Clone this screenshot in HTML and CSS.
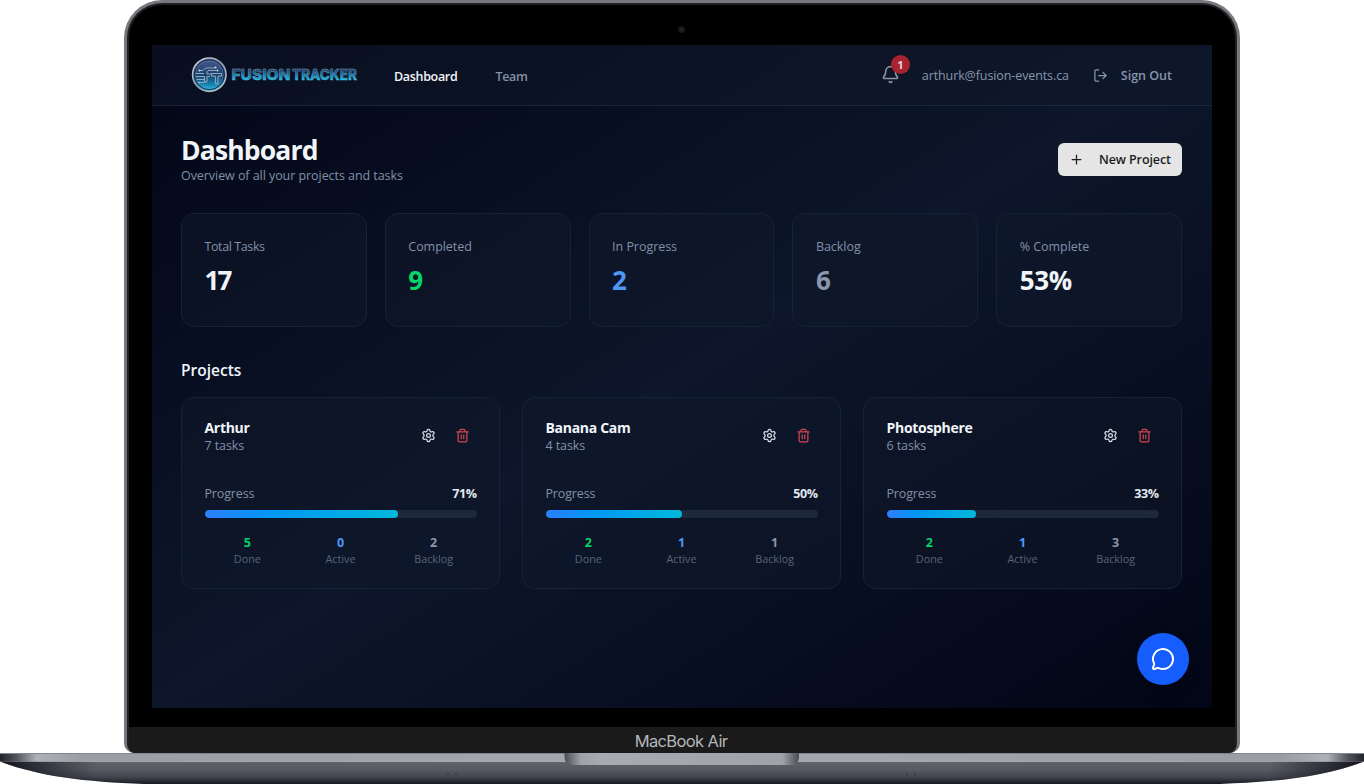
FILE: index.html
```
<!DOCTYPE html>
<html lang="en">
<head>
<meta charset="utf-8">
<title>Fusion Tracker</title>
<link rel="stylesheet" href="styles.css">
</head>
<body>
<svg class="defs" width="0" height="0">
  <defs>
    <symbol id="gear" viewBox="0 0 24 24"><path d="M9.67 4.14a2.34 2.34 0 0 1 4.66 0 2.34 2.34 0 0 0 3.32 1.91 2.34 2.34 0 0 1 2.33 4.03 2.34 2.34 0 0 0 0 3.84 2.34 2.34 0 0 1-2.33 4.03 2.34 2.34 0 0 0-3.32 1.91 2.34 2.34 0 0 1-4.66 0 2.34 2.34 0 0 0-3.32-1.91 2.34 2.34 0 0 1-2.33-4.03 2.34 2.34 0 0 0 0-3.84 2.34 2.34 0 0 1 2.33-4.03 2.34 2.34 0 0 0 3.32-1.91"/><circle cx="12" cy="12" r="3"/></symbol>
    <symbol id="trash" viewBox="0 0 24 24"><path d="M3 6h18M19 6v14a2 2 0 0 1-2 2H7a2 2 0 0 1-2-2V6M8 6V4a2 2 0 0 1 2-2h4a2 2 0 0 1 2 2v2M10 11v6M14 11v6"/></symbol>
  </defs>
</svg>
<div class="laptop">
  <div class="lid">
    <div class="bezel-top"><span class="camera"></span></div>
    <div class="screen">
      <header class="topbar">
        <svg class="logo" width="176" height="38" viewBox="0 0 176 38">
          <defs>
            <linearGradient id="disc" x1="0" y1="0" x2="0" y2="1"><stop offset="0" stop-color="#4b5c8f"/><stop offset=".5" stop-color="#1a426f"/><stop offset=".72" stop-color="#146f9d"/><stop offset="1" stop-color="#25c2ea"/></linearGradient>
            <linearGradient id="ring" x1="0" y1="0" x2="1" y2="1"><stop offset="0" stop-color="#d8dade"/><stop offset=".5" stop-color="#969ca6"/><stop offset="1" stop-color="#c9ced4"/></linearGradient>
            <linearGradient id="word" gradientUnits="userSpaceOnUse" x1="0" y1="13" x2="0" y2="25"><stop offset="0" stop-color="#183b67"/><stop offset=".4" stop-color="#1a6d9c"/><stop offset="1" stop-color="#20cdf6"/></linearGradient>
            <linearGradient id="edge" gradientUnits="userSpaceOnUse" x1="0" y1="13" x2="0" y2="25"><stop offset="0" stop-color="#8d9db5"/><stop offset="1" stop-color="#4fb4d6"/></linearGradient>
          </defs>
          <circle cx="18.3" cy="18.7" r="16.7" fill="url(#disc)" stroke="url(#ring)" stroke-width="1.6"/>
          <circle cx="18.3" cy="18.7" r="14.9" fill="none" stroke="#10264e" stroke-width="1"/>
          <circle cx="18.3" cy="18.7" r="14" fill="none" stroke="#9aabc5" stroke-opacity=".5" stroke-width=".6"/>
          <g fill="none" stroke="#a3b0c6" stroke-width=".9" stroke-linejoin="round">
            <path d="M9 14.500h3l2.500-2.500h9M25.500 14.500h-8.500l-1 1v2.500h5.500M19 20.500h-3V26h-2.500v-5.500H5M4.500 17.500h8.500M6 23.500h7M8 26.500h5.500"/>
            <path d="M20.500 17.500h10v2.600h-3.500v7.600h-2.600v-7.600h-3.900z"/>
          </g>
          <g fill="#d4dbe5"><circle cx="8.500" cy="14.500" r="1"/><circle cx="24.500" cy="11.500" r="1.100"/><circle cx="26.500" cy="14.500" r=".9"/><circle cx="8" cy="26.500" r=".8"/></g>
          <text class="wordmark" x="40.500" y="24.300" textLength="59" lengthAdjust="spacingAndGlyphs">FUSION</text>
          <text class="wordmark" x="101" y="24.300" textLength="65" lengthAdjust="spacingAndGlyphs">TRACKER</text>
        </svg>
        <nav class="nav"><a class="nav-link active">Dashboard</a><a class="nav-link">Team</a></nav>
        <div class="account">
          <div class="bell">
            <svg class="icon" width="19" height="19" viewBox="0 0 24 24"><path d="M10.268 21a2 2 0 0 0 3.464 0M3.262 15.326A1 1 0 0 0 4 17h16a1 1 0 0 0 .74-1.673C19.410 13.956 18 12.499 18 8A6 6 0 0 0 6 8c0 4.499-1.411 5.956-2.738 7.326"/></svg>
            <span class="badge">1</span>
          </div>
          <span class="email">arthurk@fusion-events.ca</span>
          <a class="signout"><svg class="icon" width="15" height="15" viewBox="0 0 24 24"><path d="m16 17 5-5-5-5M21 12H9M9 21H5a2 2 0 0 1-2-2V5a2 2 0 0 1 2-2h4"/></svg><span>Sign Out</span></a>
        </div>
      </header>
      <main class="content">
        <div class="heading">
          <div><h1 class="title">Dashboard</h1><p class="subtitle">Overview of all your projects and tasks</p></div>
          <button class="new-project"><svg class="icon" width="15" height="15" viewBox="0 0 24 24"><path d="M5 12h14M12 5v14"/></svg><span>New Project</span></button>
        </div>
        <section class="stats">
          <div class="card stat"><span class="label tight">Total Tasks</span><span class="value">17</span></div>
          <div class="card stat"><span class="label">Completed</span><span class="value green">9</span></div>
          <div class="card stat"><span class="label">In Progress</span><span class="value blue">2</span></div>
          <div class="card stat"><span class="label">Backlog</span><span class="value slate">6</span></div>
          <div class="card stat"><span class="label">% Complete</span><span class="value wide">53%</span></div>
        </section>
        <h2 class="section-title">Projects</h2>
        <section class="projects">
          <article class="card project">
            <div class="project-head"><div><h3 class="name">Arthur</h3><p class="count">7 tasks</p></div><div class="actions"><svg class="icon gear" width="15" height="15"><use href="#gear"/></svg><svg class="icon trash" width="15" height="15"><use href="#trash"/></svg></div></div>
            <div class="progress-row"><span>Progress</span><b class="percent">71%</b></div>
            <div class="track"><div class="fill" style="width:71%"></div></div>
            <div class="counts"><div><b class="num green">5</b><span>Done</span></div><div><b class="num blue">0</b><span>Active</span></div><div><b class="num slate">2</b><span>Backlog</span></div></div>
          </article>
          <article class="card project">
            <div class="project-head"><div><h3 class="name">Banana Cam</h3><p class="count">4 tasks</p></div><div class="actions"><svg class="icon gear" width="15" height="15"><use href="#gear"/></svg><svg class="icon trash" width="15" height="15"><use href="#trash"/></svg></div></div>
            <div class="progress-row"><span>Progress</span><b class="percent">50%</b></div>
            <div class="track"><div class="fill" style="width:50%"></div></div>
            <div class="counts"><div><b class="num green">2</b><span>Done</span></div><div><b class="num blue">1</b><span>Active</span></div><div><b class="num slate">1</b><span>Backlog</span></div></div>
          </article>
          <article class="card project">
            <div class="project-head"><div><h3 class="name">Photosphere</h3><p class="count">6 tasks</p></div><div class="actions"><svg class="icon gear" width="15" height="15"><use href="#gear"/></svg><svg class="icon trash" width="15" height="15"><use href="#trash"/></svg></div></div>
            <div class="progress-row"><span>Progress</span><b class="percent">33%</b></div>
            <div class="track"><div class="fill" style="width:33%"></div></div>
            <div class="counts"><div><b class="num green">2</b><span>Done</span></div><div><b class="num blue">1</b><span>Active</span></div><div><b class="num slate">3</b><span>Backlog</span></div></div>
          </article>
        </section>
      </main>
      <button class="chat"><svg class="icon" width="24" height="24" viewBox="0 0 24 24"><path d="M2.992 16.342a2 2 0 0 1 .094 1.167l-1.065 3.290a1 1 0 0 0 1.236 1.168l3.413-.998a2 2 0 0 1 1.099.092 10 10 0 1 0-4.777-4.719"/></svg></button>
    </div>
    <div class="chin">MacBook Air</div>
  </div>
  <svg class="base" width="1364" height="31" viewBox="0 0 1364 31">
    <defs>
      <linearGradient id="deck" x1="0" y1="0" x2="1" y2="0"><stop offset="0" stop-color="#23232b"/><stop offset=".012" stop-color="#54555c"/><stop offset=".027" stop-color="#b0b1b6"/><stop offset=".06" stop-color="#9c9da2"/><stop offset=".5" stop-color="#a8a9ae"/><stop offset=".94" stop-color="#9c9da2"/><stop offset=".973" stop-color="#b0b1b6"/><stop offset=".988" stop-color="#54555c"/><stop offset="1" stop-color="#23232b"/></linearGradient>
      <linearGradient id="belly" x1="0" y1="0" x2="0" y2="1"><stop offset="0" stop-color="#61636b"/><stop offset=".4" stop-color="#565861"/><stop offset=".7" stop-color="#41434d"/><stop offset="1" stop-color="#171822"/></linearGradient>
      <linearGradient id="sides" x1="0" y1="0" x2="1" y2="0"><stop offset="0" stop-color="#11121c"/><stop offset=".07" stop-color="#11121c" stop-opacity="0"/><stop offset=".93" stop-color="#11121c" stop-opacity="0"/><stop offset="1" stop-color="#11121c"/></linearGradient>
      <linearGradient id="notch" x1="0" y1="0" x2="1" y2="0"><stop offset="0" stop-color="#4c4d54"/><stop offset=".07" stop-color="#a1a2a7"/><stop offset=".15" stop-color="#a9aaaf"/><stop offset=".93" stop-color="#a1a2a7"/><stop offset="1" stop-color="#4c4d54"/></linearGradient>
    </defs>
    <path d="M0 8.500C38 23 84 29 144 31H1220C1280 29 1326 23 1364 8.500z" fill="url(#belly)"/>
    <path d="M0 8.500C38 23 84 29 144 31H1220C1280 29 1326 23 1364 8.500z" fill="url(#sides)"/>
    <path d="M0 .5h1364v8H0z" fill="url(#deck)"/>
    <path d="M0 .5h1364" stroke="#85868b" stroke-width="1"/>
    <path d="M564.500 0h234.500v4q0 8-9 8H573.500q-9 0-9-8z" fill="url(#notch)"/>
    <g fill="#34353e"><circle cx="448" cy="21" r="1"/><circle cx="456" cy="21" r="1"/><circle cx="907" cy="21" r="1"/><circle cx="915" cy="21" r="1"/></g>
  </svg>
</div>
</body>
</html>
```
FILE: styles.css
```
* { box-sizing: border-box; }
body { margin: 0; background: #fff; font-family: "Open Sans", "Noto Sans", sans-serif; overflow: hidden; }
h1, h2, h3, p { margin: 0; }
button { border: 0; padding: 0; font: inherit; }
.defs { position: absolute; }
.icon { fill: none; stroke: currentColor; stroke-width: 2; stroke-linecap: round; stroke-linejoin: round; flex: none; display: block; }

.laptop { width: 1364px; height: 784px; display: flex; flex-direction: column; align-items: center; }
.lid { width: 1116px; height: 753px; background: #000; border: solid #77787e; border-width: 3px 3px 0; border-radius: 38px 38px 10px 10px; box-shadow: inset 0 0 0 2px #202124; display: flex; flex-direction: column; align-items: center; overflow: hidden; }
.bezel-top { height: 42px; flex: none; padding-top: 23px; }
.camera { display: block; width: 7px; height: 7px; margin-right: 1px; border-radius: 50%; background: #25262b; border: 2px solid #17181b; }
.chin { width: 1106px; height: 26px; margin-top: 19px; border-radius: 0 0 9px 9px; background: #1a1a1a; color: #b4b5b9; font: 400 16.5px/28px Inter, sans-serif; letter-spacing: -.62px; text-align: center; padding-right: 2px; }
.base { display: block; flex: none; }

.screen { position: relative; width: 1060px; height: 663px; flex: none; background: linear-gradient(to bottom right, #020617, #0d162a 50%, #020617); color: #f1f5f9; }
.topbar { height: 61px; padding: 0 39px; display: flex; align-items: center; background: rgba(15, 23, 42, .5); border-bottom: 1px solid rgba(51, 75, 95, .35); }
.logo { flex: none; }
.wordmark { font: 800 15px Inter, sans-serif; fill: url(#word); stroke: url(#edge); stroke-width: .4px; }
.nav { display: flex; gap: 37px; margin-left: 27px; padding-top: 3px; font-size: 12.500px; font-weight: 600; color: #8290a6; }
.nav-link { letter-spacing: -.32px; }
.active { color: #f1f5f9; margin-right: 1px; }
.account { margin-left: auto; display: flex; align-items: center; color: #8895aa; font-size: 12.500px; }
.bell { position: relative; margin-right: 22px; top: -1px; }
.badge { position: absolute; left: 10px; top: -10px; width: 19px; height: 19px; border-radius: 50%; background: #a9222f; color: #e2d7dc; font-size: 11px; line-height: 19px; font-weight: 700; text-align: center; }
.email { width: 148px; letter-spacing: -.1px; white-space: nowrap; margin-right: 23px; }
.signout { display: flex; align-items: center; gap: 13px; padding-right: 1px; font-weight: 600; white-space: nowrap; }

.content { padding: 26px 30px 0 29px; }
.heading { display: flex; justify-content: space-between; height: 81px; }
.title { font-size: 26.500px; line-height: 36px; font-weight: 700; letter-spacing: -.85px; }
.subtitle { font-size: 12.500px; line-height: 16px; letter-spacing: -.06px; color: #8290a6; }
.new-project { width: 124px; height: 33px; margin-top: 11px; padding: 0 11px; border-radius: 6px; background: #e5e5e6; color: #1c1d20; display: flex; align-items: center; gap: 15px; font-size: 12.500px; font-weight: 600; letter-spacing: -.1px; white-space: nowrap; }
.card { border: 1px solid #172234; border-radius: 13px; background: rgba(15, 23, 42, .5); }
.stats { display: grid; grid-template-columns: repeat(5, 1fr); gap: 18px; }
.stat { height: 114px; padding: 23px 22.500px; display: flex; flex-direction: column; }
.label { font-size: 12.500px; line-height: 20px; color: #8290a6; letter-spacing: -.04px; }
.tight { letter-spacing: -.4px; }
.value { font-size: 26px; line-height: 34px; font-weight: 700; margin-top: 6px; letter-spacing: -1.8px; }
.wide { letter-spacing: -.3px; }
.green { color: #05d467; }
.blue { color: #4f97f4; }
.slate { color: #8996ac; }
.section-title { font-size: 15.500px; line-height: 22px; font-weight: 600; margin: 32px 0 16px; }
.projects { display: grid; grid-template-columns: repeat(3, 1fr); gap: 22px; }
.project { height: 192px; padding: 20px 22.500px 0 22.500px; }
.project-head { display: flex; justify-content: space-between; }
.name { font-size: 14px; line-height: 20px; font-weight: 700; letter-spacing: -.3px; }
.count { font-size: 12.500px; line-height: 16px; letter-spacing: -.1px; color: #8290a6; }
.actions { display: flex; gap: 19px; padding: 10px 7px 0 0; }
.gear { color: #d8dee8; }
.trash { color: #d24650; }
.progress-row { display: flex; justify-content: space-between; margin-top: 30px; font-size: 12.500px; line-height: 20px; letter-spacing: -.15px; color: #8290a6; }
.percent { color: #e2e8f0; font-weight: 700; letter-spacing: -.4px; }
.track { height: 8px; margin-top: 6px; border-radius: 4px; background: #1d293a; overflow: hidden; }
.fill { height: 100%; border-radius: 4px; background: linear-gradient(90deg, #2b7fff, #0098f5 36%, #00b8db); }
.counts { display: grid; grid-template-columns: repeat(3, 1fr); gap: 7.500px; margin-top: 17px; text-align: center; font-size: 10.800px; line-height: 15px; color: #56657d; }
.counts span, .num { display: block; }
.num { font-size: 12.500px; line-height: 16px; font-weight: 700; }
.chat { position: absolute; right: 23px; bottom: 23px; width: 52px; height: 52px; border-radius: 50%; background: #155dfc; color: #fff; display: flex; align-items: center; justify-content: center; box-shadow: 0 8px 14px rgba(0, 0, 0, .25); }
```
